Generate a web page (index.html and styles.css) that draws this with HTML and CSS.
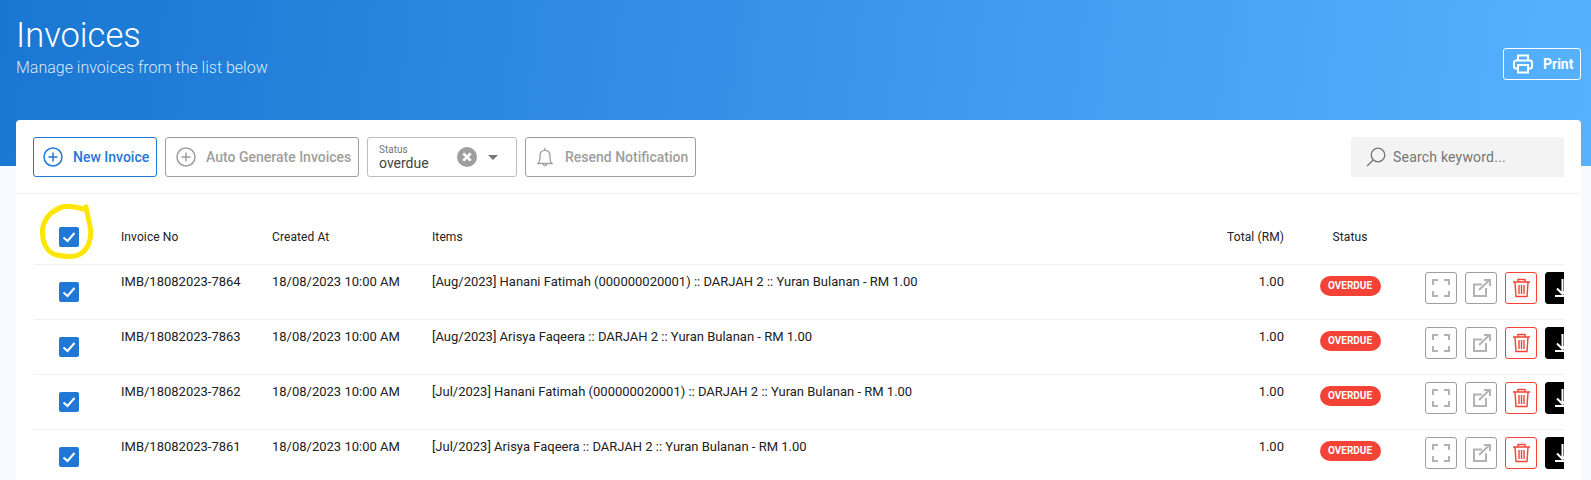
FILE: index.html
```html
<!DOCTYPE html>
<html lang="en">
<head>
<meta charset="utf-8">
<title>Invoices</title>
<link rel="stylesheet" href="styles.css">
</head>
<body>
<header class="hero">
  <div class="hero-text">
    <h1>Invoices</h1>
    <p>Manage invoices from the list below</p>
  </div>
  <button class="btn print">
    <svg class="ic-print" viewBox="0 0 20 20" fill="none" stroke="currentColor" stroke-width="2"><path d="M5 6.500V1.500h10v5"/><path d="M5 14.500H3A2 2 0 0 1 1 12.500V8.500a2 2 0 0 1 2-2h14a2 2 0 0 1 2 2v4a2 2 0 0 1-2 2H15"/><path d="M5 11h10v7.500H5z"/></svg>
    Print
  </button>
</header>
<main class="card">
  <div class="toolbar">
    <button class="btn primary"><svg class="ic-plus" viewBox="0 0 20 20" fill="none" stroke="currentColor" stroke-width="1.500"><circle cx="10" cy="10" r="9"/><path d="M10 5.500v9M5.500 10h9"/></svg>New Invoice</button>
    <button class="btn muted auto"><svg class="ic-plus" viewBox="0 0 20 20" fill="none" stroke="currentColor" stroke-width="1.500"><circle cx="10" cy="10" r="9"/><path d="M10 5.500v9M5.500 10h9"/></svg>Auto Generate Invoices</button>
    <div class="select">
      <div class="select-text"><span class="select-label">Status</span><span class="select-value">overdue</span></div>
      <svg class="ic-clear" viewBox="0 0 20 20"><circle cx="10" cy="10" r="10" fill="#9e9e9e"/><path d="M6.300 6.300l7.400 7.400M13.700 6.300l-7.400 7.400" stroke="#fff" stroke-width="2.600"/></svg>
      <span class="caret"></span>
    </div>
    <button class="btn muted resend"><svg class="ic-bell" viewBox="0 0 16 20" fill="none" stroke="currentColor" stroke-width="1.300"><path d="M1 16.500h14c-1.500-1.500-2-2.500-2-5V8.500C13 5.500 11 3.300 8 3.300S3 5.500 3 8.500v3c0 2.500-.5 3.500-2 5z"/><path d="M8 1v2.300M6.300 17a1.700 1.700 0 0 0 3.400 0"/></svg>Resend Notification</button>
    <label class="search">
      <svg class="ic-search" viewBox="0 0 20 20" fill="none" stroke="currentColor" stroke-width="1.300"><circle cx="12" cy="8" r="6.800"/><path d="M7.200 13L1 19"/></svg>
      <span>Search keyword...</span>
    </label>
  </div>
  <div class="table-wrap">
    <table>
      <colgroup><col class="c-check"><col class="c-no"><col class="c-date"><col class="c-items"><col class="c-total"><col class="c-status"><col class="c-actions"></colgroup>
      <thead>
        <tr>
          <th class="check"><span class="cb"><svg viewBox="0 0 20 20" fill="none" stroke="#fff" stroke-width="2"><path d="M4.500 10.500l4 3.500 7-8"/></svg></span></th>
          <th>Invoice No</th><th>Created At</th><th>Items</th><th class="num">Total (RM)</th><th class="ctr">Status</th><th></th>
        </tr>
      </thead>
      <tbody>
        <tr>
          <td class="check"><span class="cb"><svg viewBox="0 0 20 20" fill="none" stroke="#fff" stroke-width="2"><path d="M4.500 10.500l4 3.500 7-8"/></svg></span></td>
          <td>IMB/18082023-7864</td><td>18/08/2023 10:00 AM</td><td>[Aug/2023] Hanani Fatimah (000000020001) :: DARJAH 2 :: Yuran Bulanan - RM 1.00</td><td class="num">1.00</td><td class="ctr"><span class="badge">OVERDUE</span></td>
          <td class="acts"><div class="actions">
            <span class="act grey"><svg viewBox="0 0 30 30" fill="none" stroke="#b3b3b3" stroke-width="2"><path d="M7 12V7h5M18 7h5v5M7 18v5h5M18 23h5v-5"/></svg></span>
            <span class="act grey"><svg viewBox="0 0 30 30" fill="none" stroke="#b3b3b3" stroke-width="2"><path d="M16 11.500H8V23h12v-8"/><path d="M13 17L23.500 7M18 7h6v6"/></svg></span>
            <span class="act red"><svg viewBox="0 0 30 30" fill="none" stroke="#f44336" stroke-width="1.400"><path d="M7 9h17M12 9V6.500h7V9M9 9.500l1 14h11l1-14M13 12v9M15.500 12v9M18 12v9"/></svg></span>
            <span class="act black"><svg viewBox="0 0 30 30" fill="none" stroke="#fff" stroke-width="2"><path d="M16.500 6v15M11 15.500l5.500 5.500 5.500-5.500M9 23h16"/></svg></span>
          </div></td>
        </tr>
        <tr>
          <td class="check"><span class="cb"><svg viewBox="0 0 20 20" fill="none" stroke="#fff" stroke-width="2"><path d="M4.500 10.500l4 3.500 7-8"/></svg></span></td>
          <td>IMB/18082023-7863</td><td>18/08/2023 10:00 AM</td><td>[Aug/2023] Arisya Faqeera :: DARJAH 2 :: Yuran Bulanan - RM 1.00</td><td class="num">1.00</td><td class="ctr"><span class="badge">OVERDUE</span></td>
          <td class="acts"><div class="actions">
            <span class="act grey"><svg viewBox="0 0 30 30" fill="none" stroke="#b3b3b3" stroke-width="2"><path d="M7 12V7h5M18 7h5v5M7 18v5h5M18 23h5v-5"/></svg></span>
            <span class="act grey"><svg viewBox="0 0 30 30" fill="none" stroke="#b3b3b3" stroke-width="2"><path d="M16 11.500H8V23h12v-8"/><path d="M13 17L23.500 7M18 7h6v6"/></svg></span>
            <span class="act red"><svg viewBox="0 0 30 30" fill="none" stroke="#f44336" stroke-width="1.400"><path d="M7 9h17M12 9V6.500h7V9M9 9.500l1 14h11l1-14M13 12v9M15.500 12v9M18 12v9"/></svg></span>
            <span class="act black"><svg viewBox="0 0 30 30" fill="none" stroke="#fff" stroke-width="2"><path d="M16.500 6v15M11 15.500l5.500 5.500 5.500-5.500M9 23h16"/></svg></span>
          </div></td>
        </tr>
        <tr>
          <td class="check"><span class="cb"><svg viewBox="0 0 20 20" fill="none" stroke="#fff" stroke-width="2"><path d="M4.500 10.500l4 3.500 7-8"/></svg></span></td>
          <td>IMB/18082023-7862</td><td>18/08/2023 10:00 AM</td><td>[Jul/2023] Hanani Fatimah (000000020001) :: DARJAH 2 :: Yuran Bulanan - RM 1.00</td><td class="num">1.00</td><td class="ctr"><span class="badge">OVERDUE</span></td>
          <td class="acts"><div class="actions">
            <span class="act grey"><svg viewBox="0 0 30 30" fill="none" stroke="#b3b3b3" stroke-width="2"><path d="M7 12V7h5M18 7h5v5M7 18v5h5M18 23h5v-5"/></svg></span>
            <span class="act grey"><svg viewBox="0 0 30 30" fill="none" stroke="#b3b3b3" stroke-width="2"><path d="M16 11.500H8V23h12v-8"/><path d="M13 17L23.500 7M18 7h6v6"/></svg></span>
            <span class="act red"><svg viewBox="0 0 30 30" fill="none" stroke="#f44336" stroke-width="1.400"><path d="M7 9h17M12 9V6.500h7V9M9 9.500l1 14h11l1-14M13 12v9M15.500 12v9M18 12v9"/></svg></span>
            <span class="act black"><svg viewBox="0 0 30 30" fill="none" stroke="#fff" stroke-width="2"><path d="M16.500 6v15M11 15.500l5.500 5.500 5.500-5.500M9 23h16"/></svg></span>
          </div></td>
        </tr>
        <tr>
          <td class="check"><span class="cb"><svg viewBox="0 0 20 20" fill="none" stroke="#fff" stroke-width="2"><path d="M4.500 10.500l4 3.500 7-8"/></svg></span></td>
          <td>IMB/18082023-7861</td><td>18/08/2023 10:00 AM</td><td>[Jul/2023] Arisya Faqeera :: DARJAH 2 :: Yuran Bulanan - RM 1.00</td><td class="num">1.00</td><td class="ctr"><span class="badge">OVERDUE</span></td>
          <td class="acts"><div class="actions">
            <span class="act grey"><svg viewBox="0 0 30 30" fill="none" stroke="#b3b3b3" stroke-width="2"><path d="M7 12V7h5M18 7h5v5M7 18v5h5M18 23h5v-5"/></svg></span>
            <span class="act grey"><svg viewBox="0 0 30 30" fill="none" stroke="#b3b3b3" stroke-width="2"><path d="M16 11.500H8V23h12v-8"/><path d="M13 17L23.500 7M18 7h6v6"/></svg></span>
            <span class="act red"><svg viewBox="0 0 30 30" fill="none" stroke="#f44336" stroke-width="1.400"><path d="M7 9h17M12 9V6.500h7V9M9 9.500l1 14h11l1-14M13 12v9M15.500 12v9M18 12v9"/></svg></span>
            <span class="act black"><svg viewBox="0 0 30 30" fill="none" stroke="#fff" stroke-width="2"><path d="M16.500 6v15M11 15.500l5.500 5.500 5.500-5.500M9 23h16"/></svg></span>
          </div></td>
        </tr>
      </tbody>
    </table>
  </div>
  <svg class="scribble" viewBox="0 0 60 60" fill="none" stroke="#ffe600" stroke-width="5" stroke-linecap="round"><path d="M47.300 9C40 7 33 5.500 27.300 6.700 20 8.500 9 15 6.700 28.300 5.500 37 9 45 9 45c3 6 7 9 11.700 10 7 1.500 15 2 20 .7 5-1.500 9-6 11.600-10.700 2-5 2.700-9 2.400-13.300-.3-5-1.200-9-2.400-13.400C51.500 14 50.500 10 50 6.700"/></svg>
</main>
</body>
</html>
```
FILE: styles.css
```css
* { box-sizing: border-box; }
html, body { margin: 0; height: 480px; overflow: hidden; }
body { background: #f7fafe; font-family: Roboto, "Liberation Sans", sans-serif; color: #212121; }
.hero {
  height: 166px;
  padding: 15px 10px 0 16px;
  background: linear-gradient(97deg, #1976d2 0%, #56b2ff 100%);
  color: #fff;
  display: flex;
  justify-content: space-between;
  align-items: flex-start;
}
.hero h1 { margin: 0; font-size: 34.500px; line-height: 41px; font-weight: 300; }
.hero p { margin: 2px 0 0; font-size: 16px; line-height: 20px; font-weight: 300; color: rgba(255,255,255,.85); }
.btn {
  display: inline-flex;
  align-items: center;
  height: 40px;
  margin: 0;
  padding: 0 0 0 9px;
  font: 500 14px Roboto, sans-serif;
  background: #fff;
  border: 1px solid #9e9e9e;
  border-radius: 3px;
  white-space: nowrap;
}
.print {
  margin: 33px 0 0;
  height: 32px;
  width: 78px;
  padding: 0 0 0 9px;
  background: transparent;
  border-color: #fff;
  color: #fff;
  font-size: 14px;
  font-weight: 700;
}
.ic-print { width: 20px; height: 20px; margin-right: 10px; }
.card {
  position: relative;
  margin: -46px 10px 0 16px;
  height: 400px;
  background: #fff;
  border-radius: 4px;
  overflow: hidden;
}
.toolbar {
  display: flex;
  gap: 8px;
  align-items: center;
  height: 74px;
  padding: 17px 17px 16px;
  border-bottom: 1px solid #eef0f3;
}
.primary { width: 124px; border-color: #1f78d6; color: #1f78d6; }
.muted { color: #9e9e9e; }
.auto { width: 194px; padding-left: 10px; }
.resend { width: 171px; padding-left: 11px; }
.ic-plus { width: 20px; height: 20px; margin-right: 10px; flex: none; }
.ic-bell { width: 16px; height: 20px; margin-right: 12px; flex: none; }
.select {
  display: flex;
  align-items: center;
  width: 150px;
  height: 40px;
  padding: 0 18px 0 11px;
  border: 1px solid #bdbdbd;
  border-radius: 3px;
}
.select-text { display: flex; flex-direction: column; flex: 1; }
.select-label { font-size: 10px; line-height: 11px; color: #757575; }
.select-value { font-size: 14px; line-height: 16px; color: #424242; }
.ic-clear { width: 20px; height: 20px; margin-right: 11px; }
.caret { width: 0; height: 0; border: 5px solid transparent; border-top-color: #757575; border-bottom: 0; }
.search {
  display: flex;
  align-items: center;
  margin-left: auto;
  width: 213px;
  height: 40px;
  padding-left: 15px;
  background: #f3f3f3;
  border-radius: 3px 3px 0 0;
  color: #757575;
  font-size: 14px;
  letter-spacing: .2px;
}
.ic-search { width: 20px; height: 20px; margin-right: 7px; color: #757575; }
.table-wrap { margin: 0 17px; overflow: hidden; }
table { width: 1560px; table-layout: fixed; border-collapse: collapse; font-size: 13px; }
.c-check { width: 88px; }
.c-no { width: 151px; }
.c-date { width: 160px; }
.c-items { width: 752px; }
.c-total { width: 100px; }
.c-status { width: 132px; }
.c-actions { width: 177px; }
th { height: 70px; padding: 16px 0 0; font-size: 12px; letter-spacing: .1px; font-weight: 400; text-align: left; vertical-align: middle; border-bottom: 1px solid #eef0f3; }
td { height: 55px; padding: 9px 0 0; vertical-align: top; line-height: 15px; border-bottom: 1px solid #eef0f3; white-space: nowrap; }
.num { text-align: right; }
th.ctr, td.ctr { text-align: center; }
th.check { padding-left: 26px; }
td.check { padding: 17px 0 0 26px; }
.cb { display: block; width: 20px; height: 20px; background: #1f78d6; border-radius: 2px; }
.cb svg { display: block; width: 20px; height: 20px; }
.badge {
  display: inline-block;
  width: 61px;
  height: 20px;
  margin-top: 2px;
  border-radius: 10px;
  background: #f44336;
  color: #fff;
  font-size: 10px;
  line-height: 20px;
  font-weight: 700;
}
td.acts { padding-top: 7px; }
.actions { display: flex; gap: 8px; padding-left: 9px; }
.act { display: block; flex: none; width: 32px; height: 32px; border-radius: 3px; border: 1px solid #9e9e9e; }
.act svg { display: block; width: 30px; height: 30px; }
.act.red { border-color: #f44336; }
.act.black { background: #000; border-color: #000; }
.scribble { position: absolute; left: 20px; top: 80px; width: 60px; height: 60px; }
```
